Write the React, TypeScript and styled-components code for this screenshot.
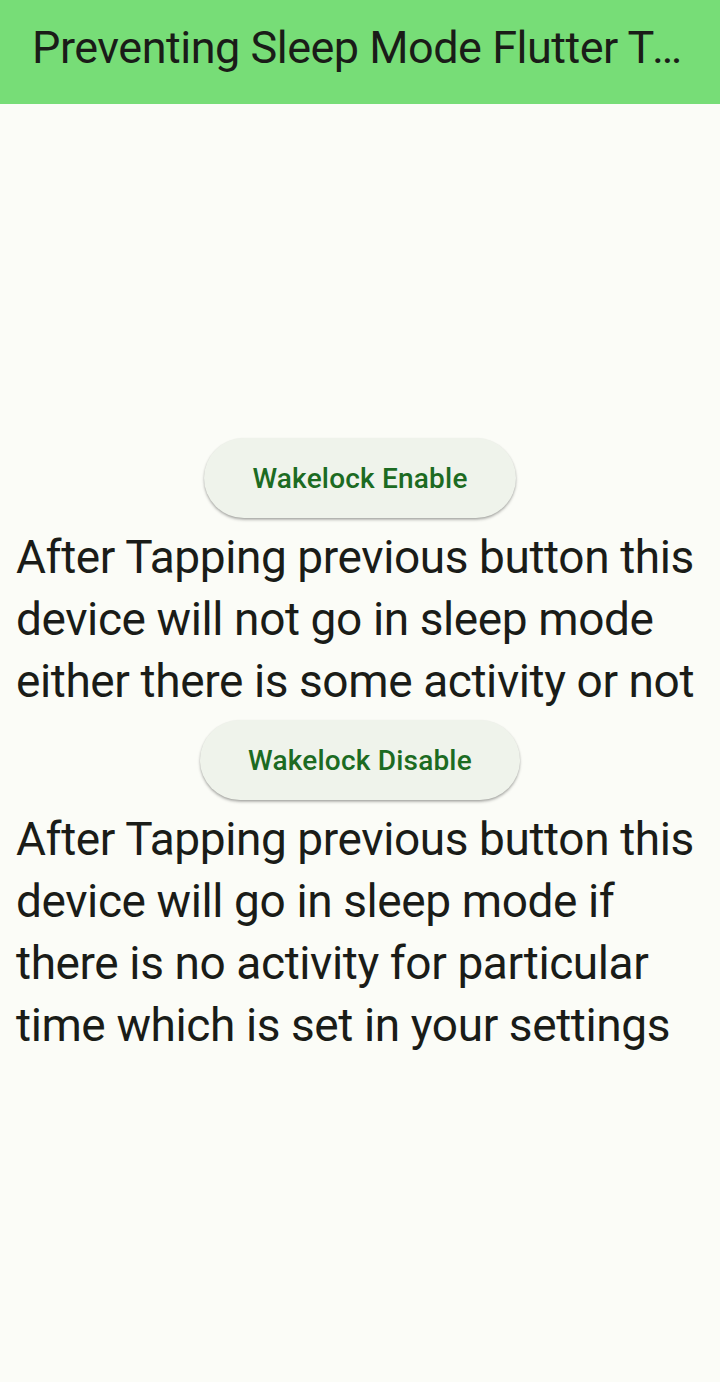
import React from 'react';
import styled, { createGlobalStyle } from 'styled-components';

const GlobalStyle = createGlobalStyle`
  html, body {
    margin: 0;
    padding: 0;
    background: #fbfcf7;
    font-family: Roboto, "Liberation Sans", sans-serif;
  }
`;

const Page = styled.div`
  display: flex;
  flex-direction: column;
  width: 720px;
  height: 1382px;
  background: #fbfcf7;
`;

const AppBar = styled.header`
  flex: 0 0 104px;
  display: flex;
  align-items: center;
  padding: 0 36px 10px 32px;
  background: #77dd77;
  box-sizing: border-box;
`;

const Title = styled.h1`
  margin: 0;
  font-size: 45px;
  font-weight: 400;
  letter-spacing: -0.5px;
  color: #1a1c18;
  white-space: nowrap;
  overflow: hidden;
  text-overflow: ellipsis;
`;

const Body = styled.main`
  flex: 1;
  display: flex;
  flex-direction: column;
  justify-content: center;
  align-items: center;
  padding: 0 16px;
`;

const ButtonSlot = styled.div`
  padding: 8px 0;
`;

const PillButton = styled.button`
  height: 80px;
  padding: 0 48px;
  border: none;
  border-radius: 40px;
  background: #eff3eb;
  color: #1c6b22;
  font-family: Roboto, "Liberation Sans", sans-serif;
  font-size: 28px;
  font-weight: 500;
  letter-spacing: 0.2px;
  box-shadow: 0 2px 3px rgba(0, 0, 0, 0.25), 0 1px 2px rgba(0, 0, 0, 0.12);
  cursor: pointer;
`;

const Note = styled.p`
  margin: 0;
  align-self: stretch;
  font-size: 46px;
  line-height: 62px;
  color: #1a1c18;
  letter-spacing: -0.4px;
`;

export default function App() {
  return (
    <>
      <GlobalStyle />
      <Page>
        <AppBar>
          <Title>Preventing Sleep Mode Flutter Tutorial</Title>
        </AppBar>
        <Body>
          <ButtonSlot>
            <PillButton>Wakelock Enable</PillButton>
          </ButtonSlot>
          <Note>
            After Tapping previous button this device will not go in sleep mode either there is some activity or not
          </Note>
          <ButtonSlot>
            <PillButton>Wakelock Disable</PillButton>
          </ButtonSlot>
          <Note>
            After Tapping previous button this device will go in sleep mode if there is no activity for particular time which is set in your settings
          </Note>
        </Body>
      </Page>
    </>
  );
}
